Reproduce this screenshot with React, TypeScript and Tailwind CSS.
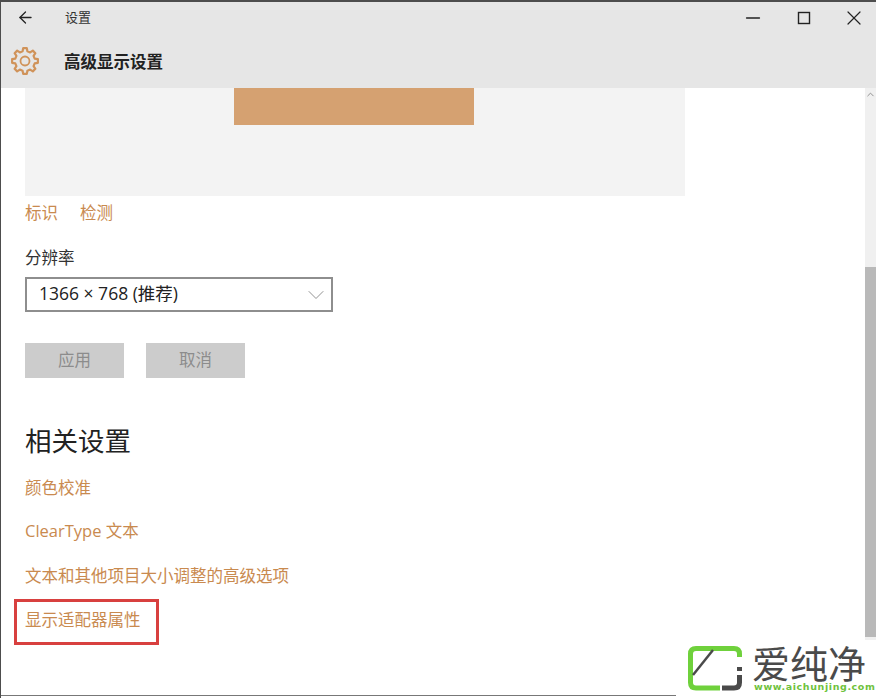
import { ArrowLeft, ChevronDown, ChevronUp, Minus, X } from "lucide-react";

const FONT = "font-['Open_Sans','Noto_Sans_CJK_SC',sans-serif]";
const CJK = "font-['Noto_Sans_CJK_SC',sans-serif]";

// windows style cog, 8 teeth around the centre of a 28 box
function gearPath() {
    const pts: string[] = [];
    const at = (deg: number, r: number) => {
        const a = (deg * Math.PI) / 180;
        return `${(14 + r * Math.cos(a)).toFixed(2)} ${(14 + r * Math.sin(a)).toFixed(2)}`;
    };
    for (let i = 0; i < 8; i++) {
        const c = i * 45;
        pts.push(at(c - 14, 10), at(c - 8, 13), at(c + 8, 13), at(c + 14, 10));
    }
    return `M${pts.join(" L")} Z`;
}

function Logo() {
    return (
        <div className="absolute right-0 bottom-0 w-[200px] h-[58px] bg-white flex items-start pl-[11px] pt-[5px]">
            <svg width="56" height="48" viewBox="0 0 56 48" fill="none" className="shrink-0">
                <path d="M52.5 12 V9 Q52.5 3.5 47 3.5 H9 Q3.5 3.5 3.5 9 V37.5 Q3.5 43 9 43 H33" stroke="#6fd13c" strokeWidth="5" />
                <path d="M52.5 30 V37.5 Q52.5 43 47 43 H35" stroke="#4a4a4a" strokeWidth="5" />
                <path d="M52.5 22 V26" stroke="#4a4a4a" strokeWidth="5" />
                <path d="M6 30 L26 5" stroke="#4a4a4a" strokeWidth="2.5" />
            </svg>
            <div className="ml-[9px] flex flex-col">
                <span className={`${CJK} text-[38px] leading-[36px] mt-[-1px] text-[#4a4a4a] whitespace-nowrap`}>爱纯净</span>
                <span className="font-['DejaVu_Sans',sans-serif] font-bold text-[9.5px] leading-[11px] tracking-[0.6px] mt-[1px] ml-[2px] text-[#6fc23c] whitespace-nowrap">www.aichunjing.com</span>
            </div>
        </div>
    );
}

export default function App() {
    return (
        <div className={`${FONT} relative w-[876px] h-[698px] overflow-hidden bg-white flex flex-col border-t-2 border-l border-[#4d4d4d]`}>
            <header className="bg-[#e6e6e6] h-[86px] shrink-0 flex flex-col">
                <div className="h-[30px] flex items-center">
                    <ArrowLeft className="w-[19px] h-[19px] ml-[15px] text-[#222]" strokeWidth={1.6} />
                    <span className={`${CJK} ml-[30px] text-[13px] text-[#333]`}>设置</span>
                    <div className="ml-auto mt-[2px] flex items-center text-[#222]">
                        <Minus className="w-[22px] h-[22px]" strokeWidth={1.5} />
                        <svg width="16" height="16" viewBox="0 0 16 16" fill="none" className="ml-[32px]">
                            <rect x="2.5" y="2.5" width="11" height="11" stroke="currentColor" strokeWidth="1.4" />
                        </svg>
                        <X className="w-[24px] h-[24px] ml-[30px] mr-[10px]" strokeWidth={1.2} />
                    </div>
                </div>
                <div className="flex items-center h-[56px] pt-[2px] pl-[10px]">
                    <svg width="28" height="28" viewBox="0 0 28 28" fill="none" stroke="#d0935a" strokeWidth="2.2" strokeLinejoin="round">
                        <path d={gearPath()} />
                        <circle cx="14" cy="14" r="4.5" strokeWidth="1.8" />
                    </svg>
                    <span className={`${CJK} ml-[25px] text-[16.5px] font-bold text-[#222]`}>高级显示设置</span>
                </div>
            </header>

            <div className="flex flex-1 min-h-0">
                <main className="flex-1 pl-[24px]">
                    <div className="w-[660px] h-[108px] bg-[#f3f3f3] flex justify-center">
                        <div className="w-[240px] h-[37px] bg-[#d5a171] ml-[-2px]" />
                    </div>

                    <div className={`${CJK} flex gap-[22px] mt-[6px] text-[16.5px] leading-[20px] text-[#c98a4f]`}>
                        <span>标识</span>
                        <span>检测</span>
                    </div>

                    <div className={`${CJK} mt-[25px] text-[16.5px] leading-[20px] text-[#333]`}>分辨率</div>

                    <div className="mt-[10px] w-[308px] h-[35px] border-2 border-[#8e8e8e] flex items-center pl-[12px] pr-[1px] text-[17.5px] text-[#222]">
                        <span className="mt-[-2px]">1366 × 768 (<span className={CJK}>推荐</span>)</span>
                        <ChevronDown className="ml-auto w-[28px] h-[28px] text-[#8a8a8a]" strokeWidth={0.8} />
                    </div>

                    <div className={`${CJK} flex gap-[22px] mt-[31px] text-[16.5px] text-[#8c8c8c]`}>
                        <div className="w-[99px] h-[35px] bg-[#cccccc] flex items-center justify-center pb-[2px]">应用</div>
                        <div className="w-[99px] h-[35px] bg-[#cccccc] flex items-center justify-center pb-[2px]">取消</div>
                    </div>

                    <h2 className={`${CJK} mt-[44px] text-[26.5px] leading-[36px] text-[#222]`}>相关设置</h2>

                    <ul className={`${CJK} mt-[19px] flex flex-col gap-[24px] text-[16.5px] leading-[20px] text-[#c98a4f]`}>
                        <li>颜色校准</li>
                        <li className={FONT}>ClearType 文本</li>
                        <li>文本和其他项目大小调整的高级选项</li>
                        <li className="relative">
                            显示适配器属性
                            <div className="absolute left-[-11px] top-[-10px] w-[145px] h-[46px] border-[3px] border-[#d8403f]" />
                        </li>
                    </ul>
                </main>

                <aside className="w-[11px] shrink-0 bg-[#f0f0f0] flex flex-col">
                    <div className="h-[179px] flex justify-center pt-[1px]">
                        <ChevronUp className="w-[11px] h-[11px] text-[#8a8a8a]" strokeWidth={2} />
                    </div>
                    <div className="h-[370px] bg-[#b9b9b9]" />
                </aside>
            </div>

            <div className="absolute left-0 right-0 bottom-[2px] h-px bg-[#777]" />
            <Logo />
        </div>
    );
}
